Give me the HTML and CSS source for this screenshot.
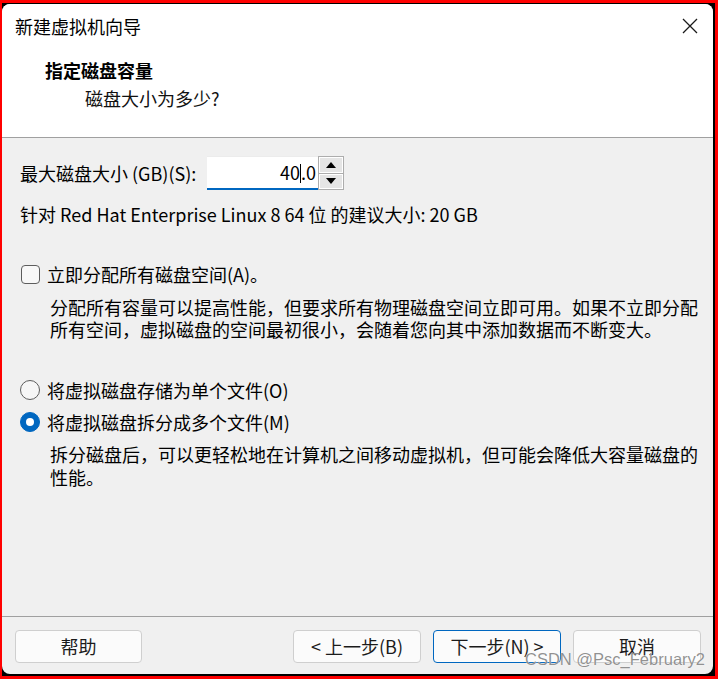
FILE: index.html
```html
<!DOCTYPE html>
<html lang="zh-CN">
<head>
<meta charset="utf-8">
<title>新建虚拟机向导</title>
<link rel="stylesheet" href="styles.css">
</head>
<body>
<div class="frame">
  <div class="dialog">
    <header class="head">
      <div class="titlebar">
        <span class="title">新建虚拟机向导</span>
        <svg class="close" width="16" height="16" viewBox="0 0 16 16"><path d="M1 1 L15 15 M15 1 L1 15" stroke="#1a1a1a" stroke-width="1.3" fill="none"/></svg>
      </div>
      <div class="h1">指定磁盘容量</div>
      <div class="h2">磁盘大小为多少?</div>
    </header>
    <main class="content">
      <div class="size-row">
        <span class="size-label">最大磁盘大小 (GB)(S):</span>
        <div class="spin">
          <div class="spin-input">40<span class="caret"></span>.0</div>
          <div class="spin-btns">
            <div class="spin-btn"><svg width="10" height="6" viewBox="0 0 10 6"><path d="M5 0 L10 6 L0 6 Z" fill="#000"/></svg></div>
            <div class="spin-btn"><svg width="10" height="6" viewBox="0 0 10 6"><path d="M0 0 L10 0 L5 6 Z" fill="#000"/></svg></div>
          </div>
        </div>
      </div>
      <p class="rec">针对 Red Hat Enterprise Linux 8 64 位 的建议大小: 20 GB</p>
      <div class="opt opt-check"><span class="checkbox"></span><span>立即分配所有磁盘空间(A)。</span></div>
      <p class="desc desc-1">分配所有容量可以提高性能，但要求所有物理磁盘空间立即可用。如果不立即分配<br>所有空间，虚拟磁盘的空间最初很小，会随着您向其中添加数据而不断变大。</p>
      <div class="opt opt-radio1"><span class="radio"></span><span>将虚拟磁盘存储为单个文件(O)</span></div>
      <div class="opt opt-radio2"><span class="radio checked"></span><span>将虚拟磁盘拆分成多个文件(M)</span></div>
      <p class="desc desc-2">拆分磁盘后，可以更轻松地在计算机之间移动虚拟机，但可能会降低大容量磁盘的<br>性能。</p>
    </main>
    <footer class="foot">
      <button class="btn">帮助</button>
      <div class="spacer"></div>
      <button class="btn">&lt; 上一步(B)</button>
      <button class="btn primary">下一步(N) &gt;</button>
      <button class="btn">取消</button>
    </footer>
    <div class="watermark">CSDN @Psc_February2</div>
  </div>
</div>
</body>
</html>
```
FILE: styles.css
```css
html, body {
  margin: 0;
  padding: 0;
  background: #ff0000;
}
body {
  width: 718px;
  height: 679px;
  overflow: hidden;
  font-family: "Noto Sans CJK SC", "Noto Sans", sans-serif;
  font-size: 18px;
  color: #000;
}
.frame {
  margin: 3px 3px 3px 2px;
  height: 673px;
  padding: 1px 2px 2px 0;
  box-sizing: border-box;
  background: #000;
}
.dialog {
  position: relative;
  height: 100%;
  border-radius: 8px;
  overflow: hidden;
  background: #f0f0f0;
  display: flex;
  flex-direction: column;
}
.head {
  background: #fff;
  height: 133px;
  border-bottom: 1px solid #a0a0a0;
  flex: none;
}
.titlebar {
  height: 44px;
  display: flex;
  align-items: center;
  padding: 0 15px 0 13px;
}
.title {
  flex: 1;
  line-height: 44px;
}
.close {
  display: block;
}
.h1 {
  margin: 11px 0 0 43px;
  line-height: 22px;
  font-weight: bold;
}
.h2 {
  margin: 6px 0 0 83px;
  line-height: 22px;
  color: #111;
}
.content {
  flex: 1;
  padding: 18px 0 0 18px;
  border-bottom: 1px solid #a0a0a0;
}
.size-row {
  display: flex;
  align-items: center;
  height: 34px;
}
.size-label {
  width: 187px;
}
.spin {
  display: flex;
  height: 34px;
}
.spin-input {
  width: 111px;
  height: 34px;
  box-sizing: border-box;
  background: #fff;
  border-top: 1px solid #ececec;
  border-bottom: 2px solid #0067c0;
  text-align: right;
  padding-right: 2px;
  line-height: 31px;
}
.caret {
  display: inline-block;
  width: 1px;
  height: 19px;
  background: #000;
  vertical-align: -3px;
}
.spin-btns {
  width: 26px;
  box-sizing: border-box;
  border: 1px solid #adadad;
  display: flex;
  flex-direction: column;
  background: #adadad;
  gap: 1px;
}
.spin-btn {
  flex: 1;
  background: #e5e5e5;
  border: 1px solid #fff;
  display: flex;
  align-items: center;
  justify-content: center;
}
.spin-btn svg { display: block; }
.rec {
  margin: 13px 0 0 0;
  line-height: 22px;
}
.opt {
  display: flex;
  align-items: center;
  height: 22px;
  gap: 7px;
}
.opt-check { margin-top: 38px; }
.opt-radio1 { margin-top: 39px; }
.opt-radio2 { margin-top: 10px; }
.checkbox {
  width: 19px;
  height: 19px;
  box-sizing: border-box;
  border: 1px solid #5d5d5d;
  border-radius: 4px;
  background: #f8f8f8;
  margin-left: 1px;
}
.radio {
  width: 20px;
  height: 20px;
  box-sizing: border-box;
  border: 1px solid #5d5d5d;
  border-radius: 50%;
  background: #f6f6f6;
  display: flex;
  align-items: center;
  justify-content: center;
}
.radio.checked {
  background: #0067c0;
  border-color: #0067c0;
}
.radio.checked::after {
  content: "";
  width: 8px;
  height: 8px;
  border-radius: 50%;
  background: #fff;
}
.desc {
  margin: 11px 0 0 30px;
  line-height: 22px;
  white-space: nowrap;
}
.desc-2 { margin-top: 10px; line-height: 23px; }
.foot {
  flex: none;
  height: 57px;
  box-sizing: border-box;
  padding: 13px 12px 0 13px;
  display: flex;
  align-items: flex-start;
  gap: 12px;
}
.spacer { flex: 1; }
.btn {
  width: 128px;
  height: 33px;
  box-sizing: border-box;
  border: 1px solid #cfcfcf;
  border-radius: 4px;
  background: #fbfbfb;
  font-family: inherit;
  font-size: 18px;
  color: #1b1b1b;
  padding: 0;
  line-height: 31px;
}
.foot .btn:first-child { width: 127px; }
.btn.primary {
  border-color: #0067c0;
}
.watermark {
  position: absolute;
  right: 8px;
  bottom: 5px;
  font-family: "Liberation Sans", Arial, sans-serif;
  font-size: 16.5px;
  color: rgba(125, 125, 125, 0.85);
  text-shadow: 0 0 1px #fff;
  pointer-events: none;
}
```
